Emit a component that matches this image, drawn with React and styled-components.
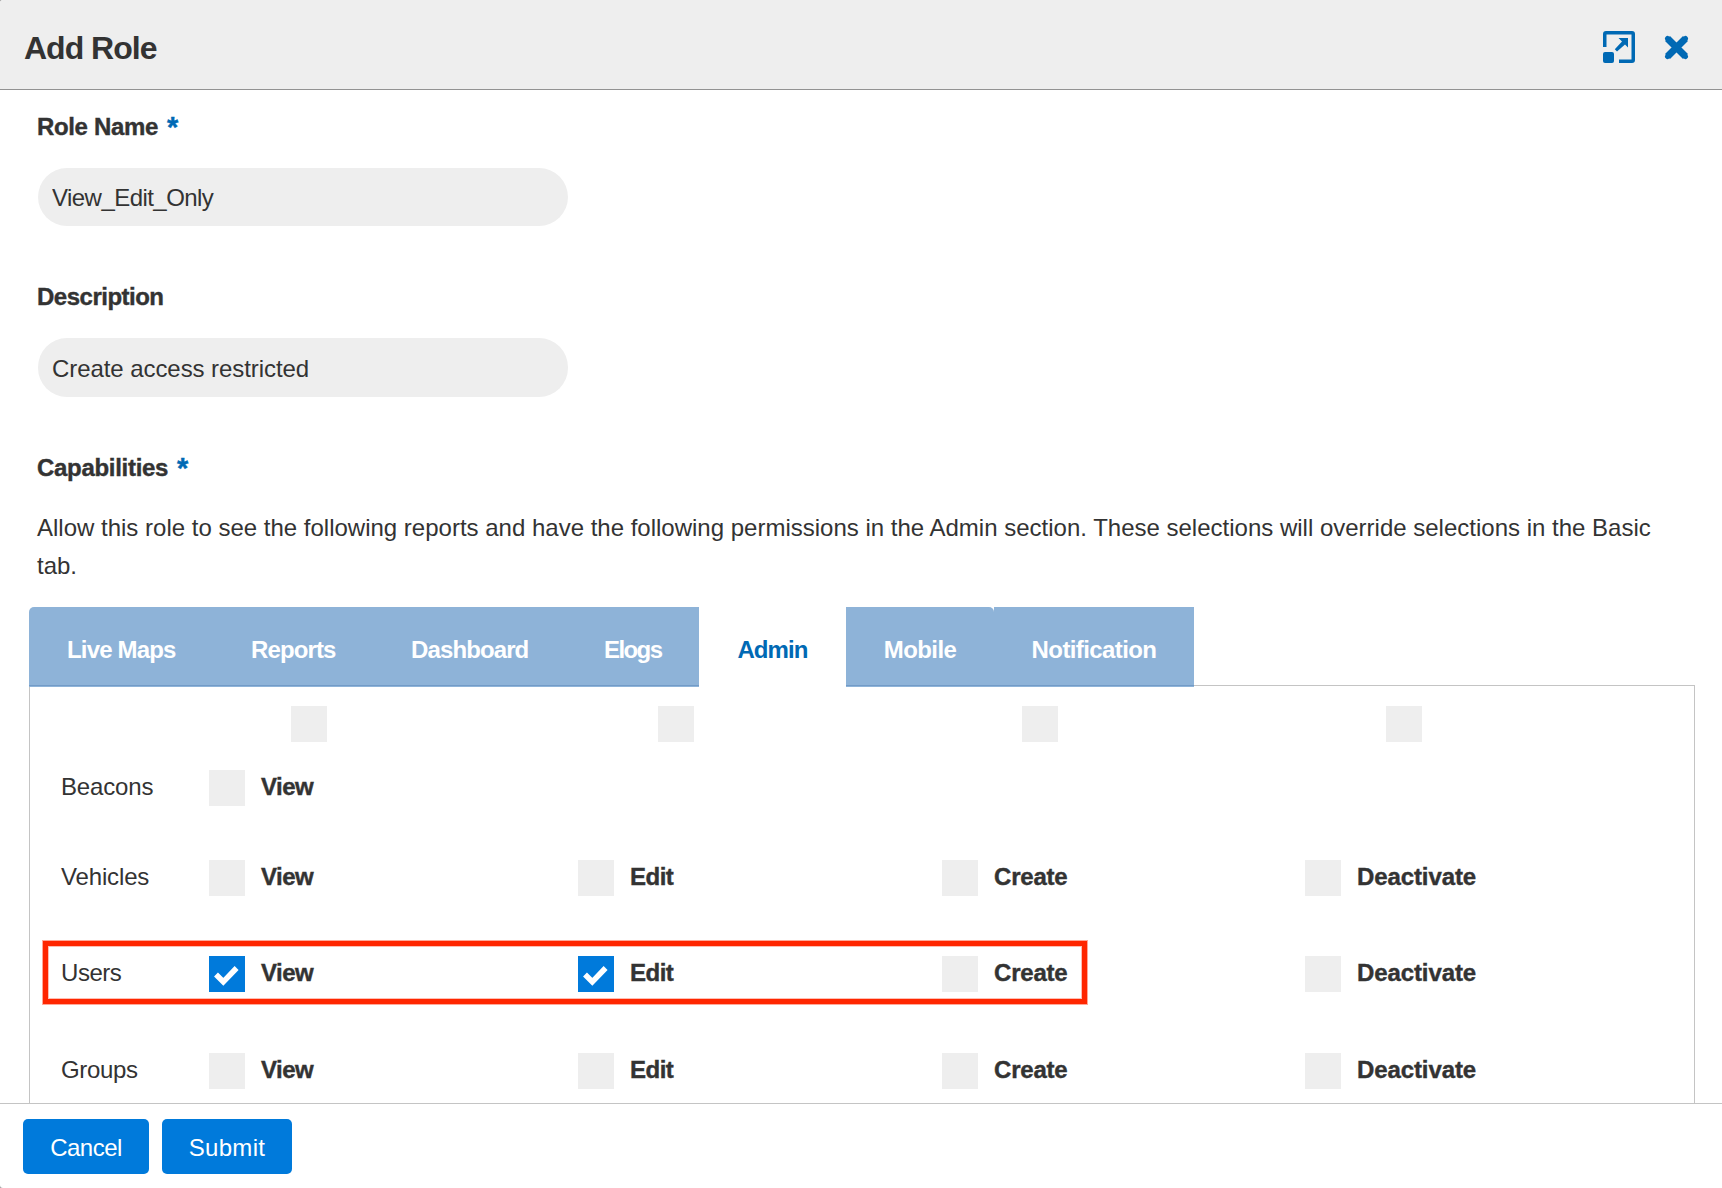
import React, { useState } from 'react'
import styled, { createGlobalStyle } from 'styled-components'

const colors = {
  text: '#333333',
  link: '#0069b4',
  button: '#007adb',
  tab: '#8eb3d8',
  field: '#eeeeee',
  line: '#c4c4c4',
  red: '#ff2600'
}

const GlobalStyle = createGlobalStyle`
  * {
    box-sizing: border-box;
  }
  body {
    margin: 0;
    background: #a0a0a0;
    color: ${colors.text};
    font-family: 'Liberation Sans', Arial, sans-serif;
    font-size: 24px;
  }
`
const Modal = styled.div`
  display: flex;
  flex-direction: column;
  width: 1722px;
  height: 1188px;
  overflow: hidden;
  border-radius: 3px 0 0 3px;
  background: white;
`
const Header = styled.header`
  display: flex;
  flex: none;
  align-items: center;
  justify-content: space-between;
  height: 90px;
  padding: 0 33px 0 24px;
  background: ${colors.field};
  border-bottom: 1px solid #929292;
`
const Title = styled.h1`
  margin: 0;
  padding-top: 6px;
  font-size: 32px;
  line-height: 36px;
  letter-spacing: -1px;
`
const HeaderActions = styled.div`
  display: flex;
  align-items: center;
  gap: 29px;
  padding-top: 5px;
`
const IconButton = styled.button`
  display: flex;
  padding: 0;
  border: none;
  background: none;
  color: ${colors.link};
  cursor: pointer;
`
const Body = styled.main`
  flex: 1;
  min-height: 0;
  overflow: hidden;
  padding: 21px 27px 0 29px;
`
const Field = styled.div`
  height: ${props => props.height}px;
  padding-left: 9px;
`
const Label = styled.label`
  display: block;
  height: 32px;
  margin-left: -1px;
  line-height: 32px;
  font-weight: bold;
  white-space: pre;
  letter-spacing: ${props => props.spacing || 0}px;
  -webkit-text-stroke: 0.4px;
`
const Required = styled.span`
  margin-left: 9px;
  color: ${colors.link};
  font-size: 29px;
  line-height: 24px;
  vertical-align: -2px;
`
const Input = styled.input`
  display: block;
  width: 530px;
  height: ${props => props.height}px;
  margin-top: 25px;
  padding: 2px 14px 0;
  border: none;
  border-radius: 29px;
  outline: none;
  background: ${colors.field};
  color: ${colors.text};
  font: inherit;
  letter-spacing: ${props => props.spacing || 0}px;
`
const Hint = styled.p`
  margin: 25px 0 0 -1px;
  line-height: 38px;
`
const Tabs = styled.div`
  display: flex;
  height: 78px;
`
const Tab = styled.button`
  flex: none;
  width: ${props => props.width}px;
  height: 80px;
  padding: 6px 0 0;
  border: none;
  border-radius: ${props => props.radius || 0};
  background: ${props =>
    props.active
      ? 'white'
      : `linear-gradient(${colors.tab} 78px, #729bc7 78px, #729bc7 79px, ${colors.tab} 79px)`};
  color: ${props => (props.active ? colors.link : 'white')};
  font: inherit;
  font-weight: bold;
  letter-spacing: ${props => props.spacing}px;
  cursor: pointer;
`
const Panel = styled.section`
  height: 460px;
  padding-top: 20px;
  border: 1px solid ${colors.line};
  border-bottom: none;
`
const Row = styled.div`
  display: grid;
  grid-template-columns: 179px 369px 364px 363px 1fr;
  width: 100%;
  height: ${props => props.height}px;
`
const RowName = styled.div`
  padding-left: 31px;
  line-height: 34px;
  letter-spacing: ${props => props.spacing}px;
`
const Permission = styled.label`
  display: flex;
  gap: 16px;
  padding-left: ${props => props.indent || 0}px;
  font-weight: bold;
  line-height: 34px;
  letter-spacing: ${props => props.spacing || 0}px;
  -webkit-text-stroke: 0.4px;
`
const CheckBox = styled.span`
  display: flex;
  flex: none;
  width: 36px;
  height: 36px;
  background: ${props => (props.checked ? colors.button : colors.field)};
`
// red frame drawn over the first four columns of a row
const Highlight = styled.div`
  position: absolute;
  left: 13px;
  top: -15px;
  width: 1044px;
  height: 63px;
  border: 5px solid ${colors.red};
  box-shadow: 0 0 0 1px rgba(255, 38, 0, 0.4), inset 0 0 0 1px rgba(255, 38, 0, 0.3);
  pointer-events: none;
`
const RowWrapper = styled.div`
  position: relative;
`
const Footer = styled.footer`
  display: flex;
  flex: none;
  gap: 13px;
  height: 85px;
  padding: 15px 23px;
  border-top: 1px solid ${colors.line};
`
const Button = styled.button`
  width: ${props => props.width}px;
  height: 55px;
  padding: 3px 0 0;
  border: none;
  border-radius: 5px;
  background: ${colors.button};
  color: white;
  font: inherit;
  letter-spacing: ${props => props.spacing}px;
  cursor: pointer;
`

const ExpandIcon = () => (
  <svg width='32' height='32' viewBox='0 0 32 32' fill='currentColor'>
    <path d='M0 16V3Q0 0 3 0H29Q32 0 32 3V29Q32 32 29 32H16V28.5H28.5V3.5H3.5V16Z' />
    <rect x='0' y='21' width='11' height='11' rx='2' />
    <path d='M15.5 7H25V16.5L22 13.5L14 20.5L11.8 18.2L19 10.5Z' />
  </svg>
)
const CloseIcon = () => (
  <svg width='25' height='25' viewBox='0 0 25 25' fill='none' stroke='currentColor'>
    <path strokeWidth='7' d='M3.5 3.5L21.5 21.5M21.5 3.5L3.5 21.5' />
    <path strokeWidth='5' strokeLinecap='round' d='M3.5 3.5L21.5 21.5M21.5 3.5L3.5 21.5' />
  </svg>
)
const CheckIcon = () => (
  <svg width='36' height='36' viewBox='0 0 36 36' fill='none' stroke='white' strokeWidth='5.5'>
    <path d='M7 18.5L14.3 25.8L27.6 12' />
  </svg>
)

const tabs = [
  { name: 'Live Maps', width: 184.5, spacing: -0.85, radius: '5px 0 0 0' },
  { name: 'Reports', width: 159.5, spacing: -0.9 },
  { name: 'Dashboard', width: 193.5, spacing: -0.9 },
  { name: 'Elogs', width: 132.5, spacing: -1.6 },
  { name: 'Admin', width: 147, spacing: -0.9 },
  { name: 'Mobile', width: 148, spacing: -0.6, radius: '0 5px 0 0' },
  { name: 'Notification', width: 200, spacing: -0.6 }
]
const rows = [
  { name: 'Beacons', height: 90, spacing: -0.15, permissions: ['View'] },
  { name: 'Vehicles', height: 96, spacing: -0.15, permissions: ['View', 'Edit', 'Create', 'Deactivate'] },
  { name: 'Users', height: 97, spacing: -0.45, permissions: ['View', 'Edit', 'Create', 'Deactivate'], highlight: true },
  { name: 'Groups', height: 50, spacing: -0.35, permissions: ['View', 'Edit', 'Create', 'Deactivate'] }
]
const spacings = { View: -0.5, Edit: -0.5, Create: -0.2, Deactivate: -0.1 }
const headerIndents = [82, 80, 80, 81]

const App = () => {
  const [active, setActive] = useState('Admin')
  const [checked, setChecked] = useState(['Users-View', 'Users-Edit'])

  const toggle = key =>
    setChecked(
      checked.includes(key) ? checked.filter(k => k !== key) : [...checked, key]
    )

  return (
    <Modal>
      <GlobalStyle />
      <Header>
        <Title>Add Role</Title>
        <HeaderActions>
          <IconButton aria-label='Expand'><ExpandIcon /></IconButton>
          <IconButton aria-label='Close'><CloseIcon /></IconButton>
        </HeaderActions>
      </Header>
      <Body>
        <Field height={170}>
          <Label spacing={-0.35}>Role Name<Required>*</Required></Label>
          <Input height={58} spacing={-0.55} defaultValue='View_Edit_Only' />
        </Field>
        <Field height={171}>
          <Label spacing={-0.5}>Description</Label>
          <Input height={59} spacing={-0.07} defaultValue='Create access restricted' />
        </Field>
        <Field height={155}>
          <Label spacing={-0.3}>Capabilities<Required>*</Required></Label>
          <Hint>
            Allow this role to see the following reports and have the following permissions in the Admin section. These selections will override selections in the Basic tab.
          </Hint>
        </Field>
        <Tabs>
          {tabs.map(tab => (
            <Tab
              key={tab.name}
              width={tab.width}
              spacing={tab.spacing}
              radius={tab.radius}
              active={tab.name === active}
              onClick={() => setActive(tab.name)}
            >
              {tab.name}
            </Tab>
          ))}
        </Tabs>
        <Panel>
          <Row height={64}>
            <span />
            {headerIndents.map((indent, index) => (
              <Permission key={index} indent={indent}>
                <CheckBox />
              </Permission>
            ))}
          </Row>
          {rows.map(row => (
            <RowWrapper key={row.name}>
              <Row height={row.height}>
                <RowName spacing={row.spacing}>{row.name}</RowName>
                {row.permissions.map(permission => {
                  const key = `${row.name}-${permission}`
                  return (
                    <Permission
                      key={key}
                      spacing={spacings[permission]}
                      onClick={() => toggle(key)}
                    >
                      <CheckBox checked={checked.includes(key)}>
                        {checked.includes(key) && <CheckIcon />}
                      </CheckBox>
                      {permission}
                    </Permission>
                  )
                })}
              </Row>
              {row.highlight && <Highlight />}
            </RowWrapper>
          ))}
        </Panel>
      </Body>
      <Footer>
        <Button width={126} spacing={-0.5}>Cancel</Button>
        <Button width={130} spacing={0.3}>Submit</Button>
      </Footer>
    </Modal>
  )
}

export default App
